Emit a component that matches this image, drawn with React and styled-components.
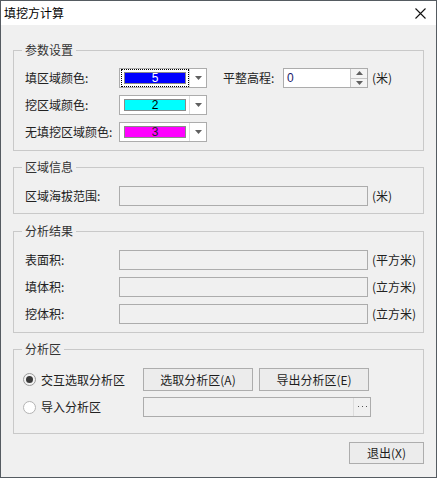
import styled, { createGlobalStyle } from "styled-components";

const Global = createGlobalStyle`
  html, body {
    margin: 0;
    padding: 0;
    background: #f0f0f0;
  }
  * {
    box-sizing: border-box;
  }
`;

const Window = styled.div`
  width: 437px;
  height: 478px;
  border: 1px solid #555b61;
  background: #f0f0f0;
  font-family: "Noto Sans CJK SC", "Microsoft YaHei", sans-serif;
  font-size: 12px;
  line-height: 16px;
  color: #222;
  display: flex;
  flex-direction: column;
`;

const TitleBar = styled.div`
  height: 24px;
  flex: none;
  background: #fff;
  display: flex;
  align-items: center;
  justify-content: space-between;
  padding: 0 10px 0 3px;
  color: #000;
`;

const Body = styled.div`
  flex: 1;
  padding: 17px 12px 0 12px;
  display: flex;
  flex-direction: column;
`;

const Group = styled.fieldset`
  margin: ${(p) => p.$top || 0}px 0 0 0;
  padding: ${(p) => p.$pt || 11}px 2px ${(p) => p.$pb || 8}px 11px;
  border: 1px solid #c9c9c9;
  min-width: 0;
  display: flex;
  flex-direction: column;
  gap: ${(p) => p.$gap || 7}px;
`;

const Legend = styled.legend`
  padding: 0 3px;
  margin-left: -3px;
  line-height: 16px;
  color: #333;
`;

const Row = styled.div`
  display: flex;
  align-items: center;
  height: ${(p) => p.$h || 20}px;
`;

const Label = styled.span`
  width: ${(p) => p.$w || 94}px;
  flex: none;
  white-space: nowrap;
  margin-left: ${(p) => p.$ml || 0}px;
`;

const Unit = styled.span`
  margin-left: 4px;
  white-space: nowrap;
`;

const Combo = styled.div`
  width: 88px;
  height: 20px;
  border: 1px solid #acacac;
  background: #fff;
  display: flex;
  padding-left: 1px;
`;

const FocusBox = styled.div`
  width: 69px;
  height: 18px;
  border: 1px dotted ${(p) => (p.$focus ? "#000" : "transparent")};
  padding: 2px;
`;

const Swatch = styled.div`
  height: 12px;
  background: ${(p) => p.$color};
  border: 1px solid #8a8a8a;
  color: ${(p) => p.$text};
  font-size: 12px;
  line-height: 10px;
  text-align: center;
  font-family: "Liberation Sans", Arial, sans-serif;
`;

const DropBtn = styled.div`
  margin-left: auto;
  width: 17px;
  border-left: 1px solid #dcdcdc;
  display: flex;
  align-items: center;
  justify-content: center;
`;

const Spin = styled.div`
  width: 85px;
  height: 20px;
  border: 1px solid #acacac;
  background: #fff;
  display: flex;
`;

const SpinText = styled.div`
  flex: 1;
  padding-left: 3px;
  line-height: 18px;
  color: #1a1a6a;
  font-family: "Liberation Sans", Arial, sans-serif;
`;

const SpinBtns = styled.div`
  width: 17px;
  border-left: 1px solid #c6c6c6;
  display: flex;
  flex-direction: column;
`;

const SpinBtn = styled.div`
  flex: 1;
  display: flex;
  align-items: center;
  justify-content: center;
  background: #f4f4f4;
  & + & {
    border-top: 1px solid #c6c6c6;
  }
`;

const ReadBox = styled.div`
  width: ${(p) => p.$w || 249}px;
  height: 20px;
  border: 1px solid #acacac;
  background: #f0f0f0;
  display: flex;
  justify-content: flex-end;
  flex: none;
`;

const DotsBtn = styled.div`
  width: 17px;
  border-left: 1px solid #dcdcdc;
  display: flex;
  align-items: center;
  justify-content: center;
`;

const Button = styled.div`
  width: ${(p) => p.$w || 110}px;
  height: ${(p) => p.$h || 23}px;
  border: 1px solid #adadad;
  background: #ececec;
  display: flex;
  align-items: center;
  justify-content: center;
  white-space: nowrap;
  color: #1e1e1e;
`;

const Buttons = styled.div`
  display: flex;
  gap: 6px;
`;

const Radio = styled.span`
  width: 13px;
  height: 13px;
  border-radius: 50%;
  border: 1px solid ${(p) => (p.$on ? "#9a9a9a" : "#b4b4b4")};
  background: ${(p) => (p.$on ? "#f2f2f2" : "#fff")};
  display: flex;
  align-items: center;
  justify-content: center;
  margin-right: 5px;
  flex: none;

  &::after {
    content: "";
    width: 7px;
    height: 7px;
    border-radius: 50%;
    background: ${(p) => (p.$on ? "#3a3a3a" : "transparent")};
  }
`;

const RadioItem = styled.div`
  width: 120px;
  margin-left: -2px;
  display: flex;
  align-items: center;
  flex: none;
  white-space: nowrap;
`;

const Footer = styled.div`
  margin-top: 8px;
  display: flex;
  justify-content: flex-end;
`;

const Arrow = ({ up }) => (
  <svg width="7" height="4" viewBox="0 0 7 4">
    <path d={up ? "M0 4 L3.5 0 L7 4 Z" : "M0 0 L7 0 L3.5 4 Z"} fill="#606060" />
  </svg>
);

const Dots = () => (
  <svg width="9" height="2" viewBox="0 0 9 2">
    <rect x="0" y="0" width="1" height="1" fill="#555" />
    <rect x="4" y="0" width="1" height="1" fill="#555" />
    <rect x="8" y="0" width="1" height="1" fill="#555" />
  </svg>
);

const ColorPicker = ({ color, text, value, focus }) => (
  <Combo>
    <FocusBox $focus={focus}>
      <Swatch $color={color} $text={text}>
        {value}
      </Swatch>
    </FocusBox>
    <DropBtn>
      <Arrow />
    </DropBtn>
  </Combo>
);

export default function App() {
  return (
    <>
      <Global />
      <Window>
        <TitleBar>
          <span>填挖方计算</span>
          <svg width="11" height="11" viewBox="0 0 11 11">
            <path d="M0.5 0.5 L10.5 10.5 M10.5 0.5 L0.5 10.5" stroke="#111" strokeWidth="1.1" />
          </svg>
        </TitleBar>
        <Body>
          <Group $pt={10} $pb={8}>
            <Legend>参数设置</Legend>
            <Row>
              <Label>填区域颜色:</Label>
              <ColorPicker color="#0000ff" text="#fff" value="5" focus />
              <Label $w={60} $ml={16}>平整高程:</Label>
              <Spin>
                <SpinText>0</SpinText>
                <SpinBtns>
                  <SpinBtn>
                    <Arrow up />
                  </SpinBtn>
                  <SpinBtn>
                    <Arrow />
                  </SpinBtn>
                </SpinBtns>
              </Spin>
              <Unit>(米)</Unit>
            </Row>
            <Row>
              <Label>挖区域颜色:</Label>
              <ColorPicker color="#00ffff" text="#000" value="2" />
            </Row>
            <Row>
              <Label>无填挖区域颜色:</Label>
              <ColorPicker color="#ff00ff" text="#222" value="3" />
            </Row>
          </Group>

          <Group $top={8} $pt={11} $pb={7}>
            <Legend>区域信息</Legend>
            <Row>
              <Label>区域海拔范围:</Label>
              <ReadBox />
              <Unit>(米)</Unit>
            </Row>
          </Group>

          <Group $top={9} $pt={11} $pb={8}>
            <Legend>分析结果</Legend>
            <Row>
              <Label>表面积:</Label>
              <ReadBox />
              <Unit>(平方米)</Unit>
            </Row>
            <Row>
              <Label>填体积:</Label>
              <ReadBox />
              <Unit>(立方米)</Unit>
            </Row>
            <Row>
              <Label>挖体积:</Label>
              <ReadBox />
              <Unit>(立方米)</Unit>
            </Row>
          </Group>

          <Group $top={8} $pt={11} $pb={16} $gap={6}>
            <Legend>分析区</Legend>
            <Row $h={23}>
              <RadioItem>
                <Radio $on />
                交互选取分析区
              </RadioItem>
              <Buttons>
                <Button>选取分析区(A)</Button>
                <Button>导出分析区(E)</Button>
              </Buttons>
            </Row>
            <Row>
              <RadioItem>
                <Radio />
                导入分析区
              </RadioItem>
              <ReadBox $w={228}>
                <DotsBtn>
                  <Dots />
                </DotsBtn>
              </ReadBox>
            </Row>
          </Group>

          <Footer>
            <Button $w={75} $h={22}>退出(X)</Button>
          </Footer>
        </Body>
      </Window>
    </>
  );
}
